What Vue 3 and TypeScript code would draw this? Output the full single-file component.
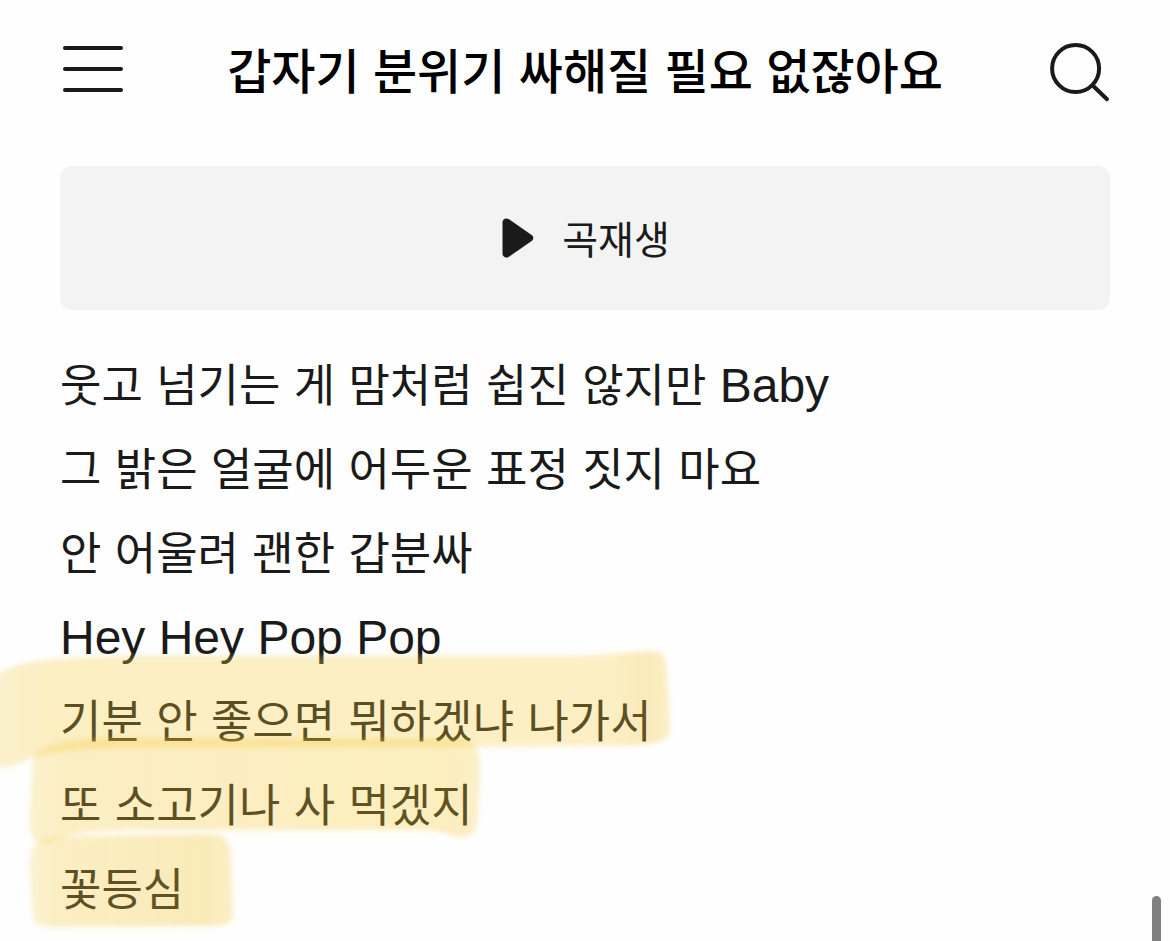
<script setup lang="ts">
interface Word {
  text: string
  hangul: boolean
}

const title: string = '갑자기 분위기 싸해질 필요 없잖아요'

const lyrics: string[] = [
  '웃고 넘기는 게 맘처럼 쉽진 않지만 Baby',
  '그 밝은 얼굴에 어두운 표정 짓지 마요',
  '안 어울려 괜한 갑분싸',
  'Hey Hey Pop Pop',
  '기분 안 좋으면 뭐하겠냐 나가서',
  '또 소고기나 사 먹겠지',
  '꽃등심',
]

const lines: Word[][] = lyrics.map((line) =>
  line.split(/( )/).map((text) => ({ text, hangul: /[가-힣]/.test(text) })),
)
</script>

<template>
  <div class="page">
    <header class="header">
      <button class="icon-button" type="button" aria-label="메뉴">
        <svg width="60" height="60" viewBox="-3 0 60 60" aria-hidden="true">
          <path d="M2 7H58M2 28H58M2 49H58" fill="none" stroke="#1a1a1a" stroke-width="4" stroke-linecap="round" />
        </svg>
      </button>
      <h1 class="title">{{ title }}</h1>
      <button class="icon-button" type="button" aria-label="검색">
        <svg width="60" height="60" viewBox="0 0 60 60" aria-hidden="true">
          <g fill="none" stroke="#1a1a1a" stroke-width="4" stroke-linecap="round">
            <circle cx="25.6" cy="27.5" r="23.5" />
            <path d="M42.5 44.3L57 58.2" />
          </g>
        </svg>
      </button>
    </header>

    <main>
      <button class="play" type="button">
        <svg width="32" height="40" viewBox="0 0 32 40" aria-hidden="true">
          <path d="M0.5 4.5C0.5 1 4 -0.7 7 1.3L29.3 16.8C32 18.7 32 21.3 29.3 23.2L7 38.7C4 40.7 0.5 39 0.5 35.5Z" fill="#1a1a1a" />
        </svg>
        <span class="play-label">곡재생</span>
      </button>

      <div class="lyrics">
        <p v-for="(line, i) in lines" :key="i" class="line">
          <span v-for="(word, j) in line" :key="j" :class="{ hangul: word.hangul }">{{ word.text }}</span>
        </p>
        <svg class="marker" width="700" height="300" viewBox="0 641 700 300" aria-hidden="true">
          <defs>
            <filter id="soft" x="-5%" y="-10%" width="110%" height="120%">
              <feGaussianBlur stdDeviation="2.8" />
            </filter>
            <linearGradient id="ink-a" gradientUnits="userSpaceOnUse" x1="0" y1="0" x2="670" y2="0">
              <stop offset="0" stop-color="#f2c834" stop-opacity="0.24" />
              <stop offset="0.06" stop-color="#f2c834" stop-opacity="0.3" />
              <stop offset="0.92" stop-color="#f5ca38" stop-opacity="0.3" />
              <stop offset="0.96" stop-color="#f2c430" stop-opacity="0.33" />
              <stop offset="1" stop-color="#f2c834" stop-opacity="0.28" />
            </linearGradient>
            <linearGradient id="ink-b" gradientUnits="userSpaceOnUse" x1="30" y1="0" x2="480" y2="0">
              <stop offset="0" stop-color="#f2c834" stop-opacity="0.24" />
              <stop offset="0.08" stop-color="#f5ca38" stop-opacity="0.3" />
              <stop offset="0.95" stop-color="#f5ca38" stop-opacity="0.32" />
              <stop offset="1" stop-color="#f2c834" stop-opacity="0.26" />
            </linearGradient>
            <linearGradient id="ink-c" gradientUnits="userSpaceOnUse" x1="30" y1="0" x2="233" y2="0">
              <stop offset="0" stop-color="#f2c834" stop-opacity="0.22" />
              <stop offset="0.14" stop-color="#f5ca38" stop-opacity="0.3" />
              <stop offset="0.85" stop-color="#f2c430" stop-opacity="0.34" />
              <stop offset="1" stop-color="#f2c834" stop-opacity="0.28" />
            </linearGradient>
          </defs>
          <g filter="url(#soft)">
            <path fill="url(#ink-a)" d="M-12 682C4 666 28 661 62 659C110 655 150 656 210 656L570 656C610 655 632 652 650 651C662 651 666 656 667 670L670 728C671 738 664 741 654 743C636 746 618 746 590 746L130 748C80 748 45 753 30 758L14 766C5 769 -3 768 -12 759Z" />
            <path fill="url(#ink-b)" d="M33 755C46 744 68 739 110 738L465 739C476 743 480 752 480 764L478 814C478 830 471 838 462 837C451 836 444 831 425 830L130 830C84 831 65 834 57 839C47 845 36 846 31 833C28 824 30 812 31 796Z" />
            <path fill="url(#ink-c)" d="M34 846C40 836 60 836 80 836L210 834C225 833 231 842 231 858L233 914C234 924 225 926 208 926L48 927C36 927 33 922 32 910L30 873C29 861 30 854 34 846Z" />
          </g>
        </svg>
      </div>
    </main>
    <div class="scroll-thumb" aria-hidden="true"></div>
  </div>
</template>

<style>
body {
  margin: 0;
  background: #fefefe;
}
</style>

<style scoped>
.page {
  position: relative;
  box-sizing: border-box;
  min-height: 100vh;
  padding: 0 60px;
  overflow: hidden;
  color: #1a1a1a;
  background: #fefefe;
  font-family: "Liberation Sans", "Noto Sans CJK KR", sans-serif;
}

.header {
  display: flex;
  align-items: center;
  justify-content: space-between;
  height: 142px;
  margin-bottom: 24px;
}

.icon-button {
  display: flex;
  padding: 0;
  border: 0;
  background: none;
}

.icon-button svg {
  overflow: visible;
}

.title {
  margin: 0;
  padding-top: 4px;
  color: #000;
  font-size: 48px;
  font-weight: 500;
  line-height: 72px;
  white-space: nowrap;
}

.play {
  display: flex;
  align-items: center;
  justify-content: center;
  gap: 28px;
  width: 100%;
  height: 144px;
  padding: 0 0 0 2px;
  border: 0;
  border-radius: 12px;
  color: inherit;
  background: #f3f3f3;
  font-family: inherit;
  font-size: 39px;
}

.play-label {
  padding-bottom: 2px;
}

.lyrics {
  position: relative;
  padding-top: 34px;
}

.line {
  height: 84px;
  margin: 0;
  font-size: 48px;
  line-height: 84px;
  white-space: pre;
}

.hangul {
  font-size: 45px;
}

.marker {
  position: absolute;
  top: 331px;
  left: -60px;
  pointer-events: none;
}

.scroll-thumb {
  position: absolute;
  right: 9px;
  bottom: 0;
  width: 9px;
  height: 45px;
  border-radius: 5px 5px 0 0;
  background: #808080;
}
</style>
